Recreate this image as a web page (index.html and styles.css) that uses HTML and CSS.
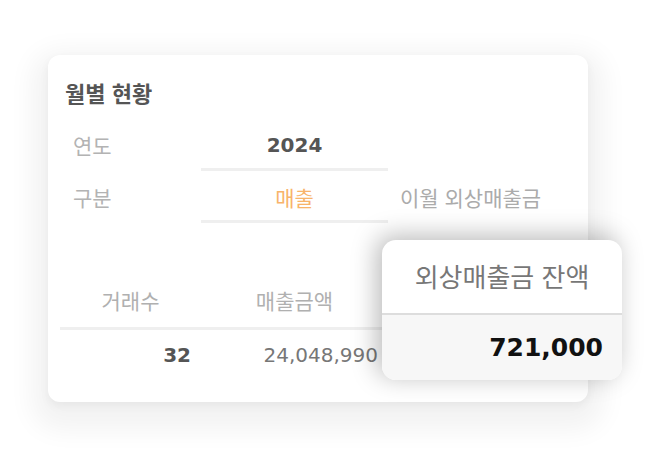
FILE: index.html
```html
<!DOCTYPE html>
<html lang="ko">
<head>
<meta charset="utf-8">
<link rel="stylesheet" href="styles.css">
</head>
<body>
<div class="stage">
  <div class="card">
    <div class="title">월별 현황</div>
    <div class="filter">
      <div class="cell label">연도</div>
      <div class="cell value year">2024</div>
      <div class="cell"></div>
      <div class="cell label">구분</div>
      <div class="cell value kind">매출</div>
      <div class="cell extra">이월 외상매출금</div>
    </div>
    <div class="table">
      <div class="th">거래수</div>
      <div class="th">매출금액</div>
      <div class="th"></div>
      <div class="td strong">32</div>
      <div class="td">24,048,990</div>
      <div class="td"></div>
    </div>
    <div class="callout">
      <div class="callout-head">외상매출금 잔액</div>
      <div class="callout-body">721,000</div>
    </div>
  </div>
</div>
</body>
</html>
```

FILE: styles.css
```css
html, body {
  margin: 0;
  padding: 0;
  background: #ffffff;
}

body {
  font-family: "DejaVu Sans", "Noto Sans CJK KR", sans-serif;
  width: 652px;
  height: 468px;
  overflow: hidden;
}

.stage {
  padding: 55px 0 0 48px;
}

.card {
  position: relative;
  width: 540px;
  height: 347px;
  box-sizing: border-box;
  padding: 23px 12px 0 12px;
  background: #ffffff;
  border-radius: 12px;
  box-shadow: 0 12px 26px 16px rgba(0, 0, 0, 0.05), 0 4px 10px rgba(0, 0, 0, 0.05);
}

.title {
  padding-left: 5px;
  height: 28px;
  line-height: 28px;
  font-family: "Noto Sans CJK KR", sans-serif;
  font-weight: 700;
  font-size: 22px;
  color: #555555;
}

.filter {
  margin-top: 13px;
  display: grid;
  grid-template-columns: 141px 187px 1fr;
  grid-auto-rows: 52px;
}

.cell {
  display: flex;
  align-items: center;
  box-sizing: border-box;
}

.label {
  padding-left: 13px;
  font-family: "Noto Sans CJK KR", sans-serif;
  font-size: 21px;
  color: #b3b3b3;
}

.value {
  justify-content: center;
  border-bottom: 3px solid #efefef;
  padding-top: 3px;
}

.year {
  font-weight: 700;
  font-size: 20px;
  color: #555555;
}

.kind {
  font-family: "Noto Sans CJK KR", sans-serif;
  font-size: 21px;
  color: #f8b46a;
}

.extra {
  padding-left: 12px;
  font-family: "Noto Sans CJK KR", sans-serif;
  font-size: 21px;
  color: #ababab;
}

.table {
  margin-top: 50px;
  display: grid;
  grid-template-columns: 141px 187px 1fr;
}

.th {
  height: 57px;
  box-sizing: border-box;
  border-bottom: 3px solid #efefef;
  display: flex;
  align-items: center;
  justify-content: center;
  font-family: "Noto Sans CJK KR", sans-serif;
  font-size: 21px;
  color: #b0b0b0;
}

.td {
  height: 50px;
  display: flex;
  align-items: center;
  justify-content: flex-end;
  padding-right: 10px;
  font-size: 20px;
  color: #777777;
}

.td.strong {
  font-weight: 700;
  color: #555555;
}

.callout {
  position: absolute;
  left: 334px;
  top: 185px;
  width: 240px;
  height: 140px;
  border-radius: 14px;
  overflow: hidden;
  background: #ffffff;
  box-shadow: -5px -4px 26px rgba(0, 0, 0, 0.28);
  display: flex;
  flex-direction: column;
}

.callout-head {
  height: 75px;
  display: flex;
  align-items: center;
  justify-content: center;
  padding-bottom: 2px;
  box-sizing: border-box;
  border-bottom: 2px solid #dddddd;
  font-family: "Noto Sans CJK KR", sans-serif;
  font-size: 26px;
  color: #777777;
}

.callout-body {
  flex: 1;
  background: #f7f7f7;
  display: flex;
  align-items: center;
  justify-content: flex-end;
  padding-right: 19px;
  font-weight: 700;
  font-size: 25px;
  color: #111111;
}
```
